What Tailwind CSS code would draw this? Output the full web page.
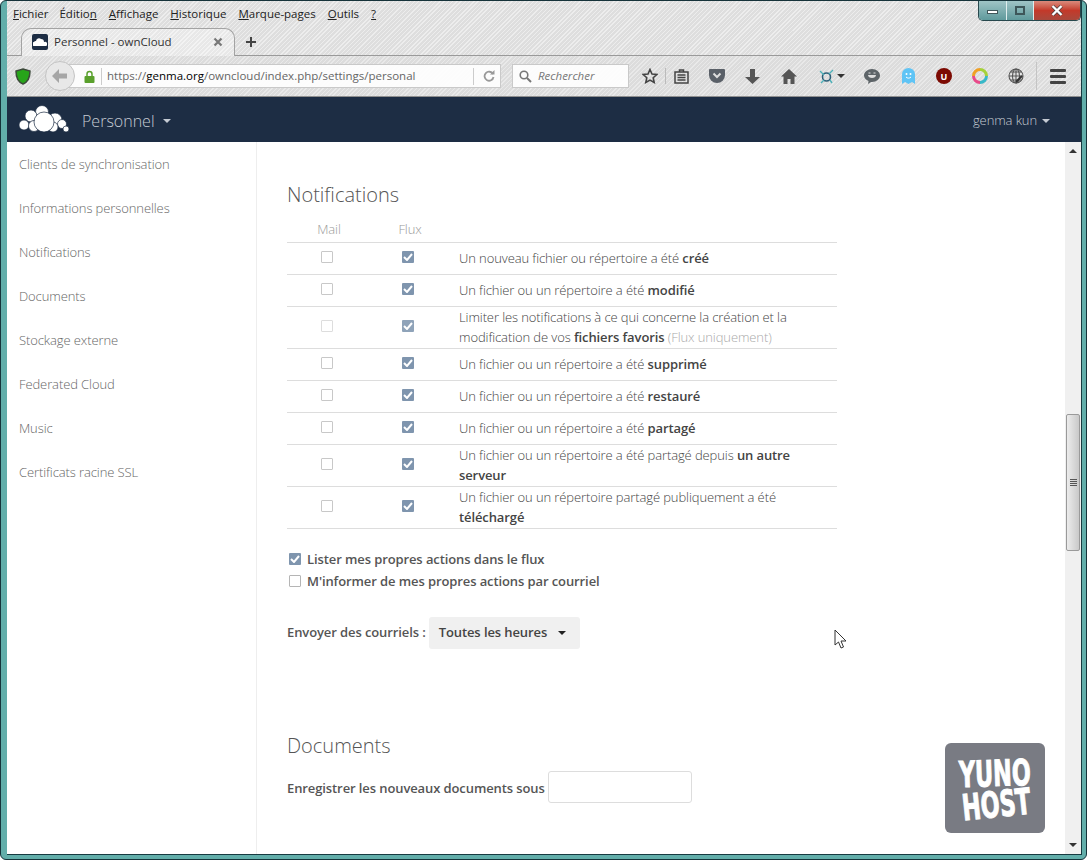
<!DOCTYPE html>
<html lang="fr">

<head>
    <meta charset="UTF-8">
    <title>Personnel - ownCloud</title>
    <script src="https://cdn.jsdelivr.net/npm/@tailwindcss/browser@4"></script>
</head>

<body class="w-[1087px] h-[860px] overflow-hidden font-['Open_Sans',sans-serif] bg-white">
    <div class="relative w-full h-full flex flex-col bg-[#62aeaa] border border-[#16333a] rounded-md pl-[6px] pr-[4px] pb-[4px] overflow-hidden">
      <div class="flex-1 min-h-0 flex flex-col border-r border-b border-[#173a40]">

        <!-- window buttons -->
        <div class="absolute top-0 right-[5px] w-[103px] h-[20px] flex rounded-b-[5px] border border-t-0 border-[#27484d] overflow-hidden z-10">
            <div class="w-[28px] flex items-center justify-center border-r border-[#dfeeee] bg-gradient-to-b from-[#9fc4c6] to-[#5f9a9c]"><span class="w-[11px] h-[4px] mt-[3px] bg-white border border-[#40575a]"></span></div>
            <div class="w-[27px] flex items-center justify-center border-r border-[#dfeeee] bg-gradient-to-b from-[#9fc4c6] to-[#5f9a9c]"><span class="w-[10px] h-[9px] bg-transparent border-2 border-[#3d5659]"></span></div>
            <div class="flex-1 flex items-center justify-center bg-gradient-to-b from-[#d98a7c] via-[#c3392a] to-[#a8483c]">
                <svg width="14" height="11" viewBox="0 0 14 11"><path d="M2.500 1l9 9m0-9l-9 9" stroke="#3d3d3d" stroke-width="3.600"/><path d="M2.500 1l9 9m0-9l-9 9" stroke="#fff" stroke-width="2.400"/></svg>
            </div>
        </div>

        <!-- menu bar + tabs -->
        <div class="h-[55px] shrink-0 flex flex-col bg-[repeating-linear-gradient(135deg,#ededed_0px,#ededed_1px,#dedede_1px,#dedede_3px)] border-b border-[#9a9a9a]">
            <div class="h-[25px] flex items-center pl-[6px] gap-[12px] text-[11.5px] text-[#222]">
                <span><u>F</u>ichier</span>
                <span class="-ml-px">Éditio<u>n</u></span>
                <span><u>A</u>ffichage</span>
                <span><u>H</u>istorique</span>
                <span><u>M</u>arque-pages</span>
                <span><u>O</u>utils</span>
                <span><u>?</u></span>
            </div>
            <div class="flex items-end h-[30px] pl-[14px]">
                <div class="relative w-[214px] h-[28px] -mb-px pb-[2px] flex items-center pl-[10px] pr-[11px] bg-[repeating-linear-gradient(135deg,#f3f3f3_0px,#f3f3f3_1px,#e8e8e8_1px,#e8e8e8_3px)] border border-b-0 border-[#a3a3a3] rounded-t-[10px] text-[11.5px] text-[#333]">
                    <span class="w-[16px] h-[16px] mr-[6px] flex items-center justify-center rounded-[2px] bg-[#1d2d44]">
                        <svg width="14" height="8" viewBox="0 0 14 8"><path fill="#fff" d="M1 8a2 2 0 0 1 0-4 2 2 0 0 1 2-1 3 3 0 0 1 5-2 3 3 0 0 1 3 3 2 2 0 0 1 2 4z"/></svg>
                    </span>
                    <span>Personnel - ownCloud</span>
                    <svg class="ml-auto" width="10" height="10" viewBox="0 0 10 10"><path d="M1.500 1.500l7 7m0-7l-7 7" stroke="#777" stroke-width="2.200"/></svg>
                </div>
                <svg class="ml-[10px] mb-[7px]" width="12" height="12" viewBox="0 0 12 12"><path d="M6 1v10M1 6h10" stroke="#444" stroke-width="2"/></svg>
            </div>
        </div>

        <!-- toolbar -->
        <div class="h-[41px] flex items-center shrink-0 bg-[repeating-linear-gradient(135deg,#e9e9e9_0px,#e9e9e9_1px,#dcdcdc_1px,#dcdcdc_3px)] border-b border-[#8f8f8f]">
            <svg class="ml-[8px]" width="16" height="17" viewBox="0 0 16 17"><path d="M8 1l7 2c0 6-2 11-7 13C3 14 1 9 1 3z" fill="#27a51a" stroke="#3c4a3a" stroke-width="1.500"/></svg>
            <div class="ml-[14px] -mr-[8px] w-[30px] h-[30px] z-10 flex items-center justify-center rounded-full bg-[#e8e8e8] border border-[#c4c4c4]">
                <svg width="16" height="14" viewBox="0 0 16 14"><path d="M7 0L0 7l7 7V9.500h8v-5H7z" fill="#a6a6a6"/></svg>
            </div>
            <div class="w-[434px] h-[24px] flex items-center bg-white/90 border border-[#c9c9c9] text-[11.500px] text-[#666]">
                <svg class="ml-[16px]" width="11" height="13" viewBox="0 0 11 13"><path d="M3 6V4a2.500 2.500 0 0 1 5 0v2" fill="none" stroke="#5aa02c" stroke-width="1.500"/><rect x="0.500" y="6" width="10" height="7" rx="1" fill="#5aa02c"/></svg>
                <span class="ml-[6px] w-px h-[17px] bg-[#ccc]"></span>
                <span class="ml-[5px]">https://<span class="text-black">genma.org</span>/owncloud/index.php/settings/personal</span>
                <span class="ml-auto w-px h-[17px] bg-[#ccc]"></span>
                <svg class="ml-[9px] mr-[5px]" width="12" height="12" viewBox="0 0 12 12"><path d="M10 4a4.500 4.500 0 1 0 .5 3" fill="none" stroke="#999" stroke-width="1.800"/><path d="M7 4.500h4.500V0z" fill="#999"/></svg>
            </div>
            <div class="ml-[11px] w-[117px] h-[24px] flex items-center bg-white/90 border border-[#c9c9c9] text-[11.500px] italic text-[#777]">
                <svg class="ml-[6px] mr-[6px]" width="13" height="13" viewBox="0 0 13 13"><circle cx="5" cy="5" r="3.800" fill="none" stroke="#777" stroke-width="1.600"/><path d="M8 8l4 4" stroke="#777" stroke-width="2"/></svg>
                <span>Rechercher</span>
            </div>
            <svg class="ml-[13px]" width="16" height="16" viewBox="0 0 16 16"><path d="M8 1.500l2 4.500 4.800.5-3.600 3.200 1 4.800L8 12.100 3.800 14.500l1-4.800L1.200 6.500 6 6z" fill="none" stroke="#444" stroke-width="1.600"/></svg>
            <span class="ml-[7px] w-px h-[16px] bg-[#bbb]"></span>
            <svg class="ml-[8px]" width="15" height="15" viewBox="0 0 15 15"><path d="M1 3h13v11H1z M5.500 1h4v2h-4z" fill="none" stroke="#444" stroke-width="1.500"/><path d="M3.500 6h8M3.500 8.500h8M3.500 11h8" stroke="#444" stroke-width="1.300"/></svg>
            <svg class="ml-[20px]" width="16" height="14" viewBox="0 0 16 14"><path d="M1 0h14a1 1 0 0 1 1 1v5a8 8 0 0 1-16 0V1a1 1 0 0 1 1-1z" fill="#5a6068"/><path d="M4.500 4.500L8 8l3.500-3.500" fill="none" stroke="#ddd" stroke-width="2"/></svg>
            <svg class="ml-[20px]" width="15" height="15" viewBox="0 0 15 15"><path d="M5 0h5v8h5l-7.500 7L0 8h5z" fill="#555"/></svg>
            <svg class="ml-[21px]" width="16" height="15" viewBox="0 0 16 15"><path d="M8 0L0 7.500h2.500V15h4v-5h3v5h4V7.500H16z" fill="#555"/></svg>
            <svg class="ml-[22px]" width="15" height="15" viewBox="0 0 15 15"><circle cx="7.500" cy="8" r="4" fill="none" stroke="#2c5f78" stroke-width="1.600"/><path d="M1 2l4 4M14 1l-4 4M2 14l3-3M13 14l-2-3" stroke="#4eb0b8" stroke-width="1.400"/></svg>
            <span class="ml-[3px] w-0 h-0 border-x-[4px] border-x-transparent border-t-[4px] border-t-[#333]"></span>
            <svg class="ml-[19px]" width="16" height="15" viewBox="0 0 16 15"><path d="M8 0c4.500 0 8 3 8 6.500S12.500 13 8 13l-1 0-3 2 .5-3C2 11 0 9 0 6.500 0 3 3.500 0 8 0z" fill="#5d6468"/><path d="M4 6h8c0 4-8 4-8 0z" fill="#ddd"/><path d="M4.500 4h2M9.500 4h2" stroke="#ddd"/></svg>
            <svg class="ml-[22px]" width="13" height="16" viewBox="0 0 13 16"><path d="M0 16V6a6.500 6 0 0 1 13 0v10l-3-2-3.500 2-3.500-2z" fill="#5fc4f5"/><circle cx="4.500" cy="6" r="1" fill="#fff"/><circle cx="8.500" cy="6" r="1" fill="#fff"/><path d="M4 9c1.500 1.500 3.500 1.500 5 0" fill="none" stroke="#fff"/></svg>
            <div class="ml-[21px] w-[16px] h-[16px] rounded-full bg-[#7c0a02] text-white text-[9px] font-bold flex items-center justify-center leading-none">U</div>
            <svg class="ml-[20px]" width="16" height="16" viewBox="0 0 16 16" fill="none" stroke-width="3"><path d="M8 1.500a6.500 6.500 0 0 1 6.500 6.500" stroke="#a5d13a"/><path d="M14.500 8A6.500 6.500 0 0 1 8 14.500" stroke="#37b8c8"/><path d="M8 14.500A6.500 6.500 0 0 1 1.500 8" stroke="#e84a8a"/><path d="M1.500 8A6.500 6.500 0 0 1 8 1.500" stroke="#f0a024"/></svg>
            <svg class="ml-[20px]" width="16" height="16" viewBox="0 0 16 16" fill="none" stroke="#555" stroke-width="1.100"><circle cx="8" cy="8" r="7"/><path d="M1 8h14M8 1v14M3 4h10M3 12h10"/><ellipse cx="8" cy="8" rx="3.500" ry="7"/><path d="M8 14l6-6" stroke="#333" stroke-width="2"/></svg>
            <span class="ml-[12px] w-px h-[28px] bg-[#c4c4c4]"></span>
            <div class="ml-[13px] w-[16px] flex flex-col gap-[3px]">
                <span class="h-[3px] bg-[#444] rounded-[1px]"></span><span class="h-[3px] bg-[#444] rounded-[1px]"></span><span class="h-[3px] bg-[#444] rounded-[1px]"></span>
            </div>
        </div>

        <!-- owncloud header -->
        <div class="h-[45px] shrink-0 flex items-center bg-[#1d2d44] text-[#c5cbd3] tracking-[-0.1px]">
            <svg class="ml-[12px] mb-[2px]" width="51" height="28" viewBox="0 0 51 28"><g fill="#fff" stroke="#1d2d44" stroke-width="0.700"><circle cx="23" cy="7" r="6.500"/><circle cx="12" cy="11" r="6"/><circle cx="5" cy="20" r="5"/><circle cx="36" cy="15" r="7"/><circle cx="43" cy="19" r="4.500"/><circle cx="47" cy="24" r="3"/><circle cx="15" cy="21" r="5.500"/><circle cx="34" cy="22" r="5"/><circle cx="25" cy="17" r="10"/></g></svg>
            <span class="ml-[12px] pt-[2px] text-[16px] font-light tracking-normal">Personnel</span>
            <span class="ml-[8px] mt-[2px] w-0 h-0 border-x-[4px] border-x-transparent border-t-[4px] border-t-[#c5cbd3]"></span>
            <span class="ml-auto pt-[2px] text-[13px] font-light">genma kun</span>
            <span class="ml-[5px] mr-[31px] mt-[2px] w-0 h-0 border-x-[4px] border-x-transparent border-t-[4px] border-t-[#c5cbd3]"></span>
        </div>

        <!-- page -->
        <div class="relative flex-1 flex min-h-0 bg-white overflow-hidden tracking-[-0.1px]">
            <aside class="w-[250px] shrink-0 pt-[1px] border-r border-[#eee] flex flex-col text-[13px] font-light text-[#666]">
                <a class="h-[44px] shrink-0 pl-[12px] flex items-center">Clients de synchronisation</a>
                <a class="h-[44px] shrink-0 pl-[12px] flex items-center">Informations personnelles</a>
                <a class="h-[44px] shrink-0 pl-[12px] flex items-center">Notifications</a>
                <a class="h-[44px] shrink-0 pl-[12px] flex items-center">Documents</a>
                <a class="h-[44px] shrink-0 pl-[12px] flex items-center">Stockage externe</a>
                <a class="h-[44px] shrink-0 pl-[12px] flex items-center">Federated Cloud</a>
                <a class="h-[44px] shrink-0 pl-[12px] flex items-center">Music</a>
                <a class="h-[44px] shrink-0 pl-[12px] flex items-center">Certificats racine SSL</a>
            </aside>

            <main class="flex-1 pl-[30px] pt-[38px] text-[#555]">
                <h2 class="text-[20px] leading-[30px] font-light tracking-normal">Notifications</h2>
                <div id="notif-table" class="w-[550px] mt-[7px] text-[13px] font-light leading-[20px] text-[#444]">
                    <div class="h-[26px] pb-[2px] flex items-center border-b border-[#ddd] text-[#999]">
                        <span class="w-[84px] text-center">Mail</span>
                        <span class="w-[78px] text-center">Flux</span>
                    </div>
                </div>

                <div class="mt-[20px] ml-[2px] flex flex-col gap-[2px] text-[13px] font-semibold leading-[20px]">
                    <label class="flex items-center gap-[6px]"><span class="w-[12px] h-[12px] rounded-[1px] bg-[#7f95ae] flex items-center justify-center"><svg width="10" height="8" viewBox="0 0 10 8"><path d="M1 4l3 3 5-6" fill="none" stroke="#fff" stroke-width="2"/></svg></span>Lister mes propres actions dans le flux</label>
                    <label class="flex items-center gap-[6px]"><span class="w-[12px] h-[12px] border border-[#b5b5b5] rounded-[1px] bg-white"></span>M'informer de mes propres actions par courriel</label>
                </div>

                <div class="mt-[26px] flex items-center text-[13px] font-semibold">
                    <span>Envoyer des courriels :</span>
                    <div class="ml-[3px] w-[151px] h-[32px] pl-[10px] flex items-center rounded-[3px] bg-[#f0f0f0] text-[#444]">
                        Toutes les heures
                        <span class="ml-[11px] w-0 h-0 border-x-[4px] border-x-transparent border-t-[4px] border-t-[#222]"></span>
                    </div>
                </div>

                <h2 class="mt-[82px] text-[20px] leading-[30px] font-light tracking-normal">Documents</h2>
                <div class="mt-[10px] flex items-center text-[13px] font-semibold">
                    <span class="pt-[4px]">Enregistrer les nouveaux documents sous</span>
                    <span class="ml-[3px] w-[144px] h-[32px] bg-white border border-[#ddd] rounded-[3px]"></span>
                </div>
            </main>

            <!-- scrollbar -->
            <div class="w-[16px] shrink-0 flex flex-col bg-[#f0f0f0]">
                <div class="h-[17px] flex items-center justify-center"><span class="w-0 h-0 border-x-[4px] border-x-transparent border-b-[4px] border-b-[#333]"></span></div>
                <div class="mt-[255px] h-[137px] mx-px flex flex-col gap-px items-center justify-center border border-[#9a9a9a] rounded-[2px] bg-gradient-to-r from-[#ececec] to-[#c9c9c9]">
                    <span class="w-[7px] h-px bg-[#555]"></span>
                    <span class="w-[7px] h-px bg-[#555]"></span>
                    <span class="w-[7px] h-px bg-[#555]"></span>
                    <span class="w-[7px] h-px bg-[#555]"></span>
                </div>
                <div class="mt-auto h-[19px] flex items-center justify-center"><span class="w-0 h-0 border-x-[4px] border-x-transparent border-t-[4px] border-t-[#333]"></span></div>
            </div>

            <!-- yunohost badge -->
            <div class="absolute left-[938px] top-[601px] w-[100px] h-[90px] pt-[2px] rounded-[6px] bg-[#797b83] flex flex-col items-center justify-center font-['DejaVu_Sans',sans-serif] font-bold text-white text-[36px] leading-[31px] [-webkit-text-stroke:1px_white]">
                <span class="-rotate-2 scale-x-[0.62] translate-x-[0px]">YUNO</span>
                <span class="-rotate-6 scale-x-[0.62] translate-x-[1px]">HOST</span>
            </div>

            <!-- mouse cursor -->
            <svg class="absolute left-[827px] top-[487px]" width="14" height="20" viewBox="0 0 14 20"><path d="M1 1v15l3.500-3 2.500 6 2.500-1-2.500-6h5z" fill="#fff" stroke="#333"/></svg>
        </div>
      </div>
    </div>

    <script>
        const notifRows = [
            { h: "h-[32px]", text: 'Un nouveau fichier ou répertoire a été <b class="font-semibold">créé</b>' },
            { h: "h-[32px]", text: 'Un fichier ou un répertoire a été <b class="font-semibold">modifié</b>' },
            { h: "h-[42px]", faded: true, text: 'Limiter les notifications à ce qui concerne la création et la modification de vos <b class="font-semibold">fichiers favoris</b> <span class="text-[#aaa]">(Flux uniquement)</span>' },
            { h: "h-[32px]", text: 'Un fichier ou un répertoire a été <b class="font-semibold">supprimé</b>' },
            { h: "h-[32px]", text: 'Un fichier ou un répertoire a été <b class="font-semibold">restauré</b>' },
            { h: "h-[32px]", text: 'Un fichier ou un répertoire a été <b class="font-semibold">partagé</b>' },
            { h: "h-[42px]", text: 'Un fichier ou un répertoire a été partagé depuis <b class="font-semibold">un autre serveur</b>' },
            { h: "h-[42px]", text: 'Un fichier ou un répertoire partagé publiquement a été <b class="font-semibold">téléchargé</b>' }
        ];

        const table = document.getElementById("notif-table");
        notifRows.forEach((row) => {
            const mailBorder = row.faded ? "border-[#ddd]" : "border-[#c8c8c8]";
            const fluxBg = row.faded ? "bg-[#8fa3b9]" : "bg-[#7f95ae]";
            const div = document.createElement("div");
            div.className = `${row.h} flex items-center border-b border-[#ddd]`;
            div.innerHTML = `
                <span class="w-[80px] mb-[3px] flex justify-center"><span class="w-[12px] h-[12px] border ${mailBorder} rounded-[1px] bg-white"></span></span>
                <span class="w-[82px] mb-[3px] flex justify-center"><span class="w-[12px] h-[12px] rounded-[1px] ${fluxBg} flex items-center justify-center"><svg width="10" height="8" viewBox="0 0 10 8"><path d="M1 4l3 3 5-6" fill="none" stroke="#fff" stroke-width="2"/></svg></span></span>
                <span class="pl-[10px] w-[375px] mb-[2px]">${row.text}</span>`;
            table.appendChild(div);
        });
    </script>
</body>

</html>
